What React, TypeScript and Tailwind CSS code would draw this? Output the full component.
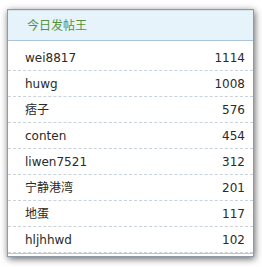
const ROWS: [string, number][] = [
  ['wei8817', 1114],
  ['huwg', 1008],
  ['痞子', 576],
  ['conten', 454],
  ['liwen7521', 312],
  ['宁静港湾', 201],
  ['地蛋', 117],
  ['hljhhwd', 102],
]

export default function App() {
  return (
    <div className="w-[262px] h-[267px] bg-white pt-[9px] pl-[7px]">
      <div
        className="w-[247px] h-[248px] bg-white border border-[#8e9aa6] shadow-[1px_2px_7px_rgba(0,0,0,0.6)]"
        style={{ fontFamily: '"DejaVu Sans", Verdana, "Noto Sans CJK SC", sans-serif' }}
      >
        <div className="h-[31px] bg-[#e6f3fa] border-t border-[#d5e3ec] border-b border-b-[#a9c6dc] flex items-center pl-[19px]">
          <span className="text-[12px] text-[#55913a]">今日发帖王</span>
        </div>
        <div className="pt-[4px]">
          {ROWS.map(([name, n]) => (
            <div
              key={name}
              className="h-[26px] flex items-center justify-between pl-[17px] pr-[8px] border-b border-dashed border-[#c9d2da] text-[12px] text-[#2a2a2a]"
            >
              <span>{name}</span>
              <span>{n}</span>
            </div>
          ))}
        </div>
        <div className="border-t border-[#b5c8dc]" />
      </div>
    </div>
  )
}
